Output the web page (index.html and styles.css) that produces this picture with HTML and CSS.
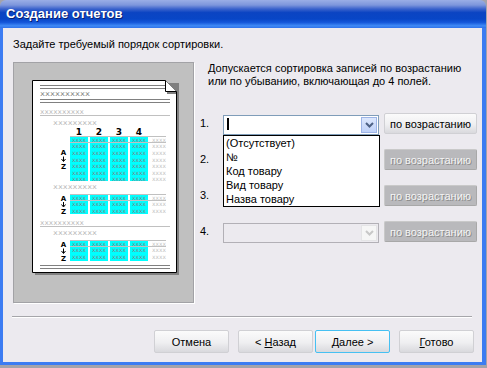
FILE: index.html
```html
<!DOCTYPE html>
<html>
<head>
    <title>Создание отчетов</title>
    <link rel="stylesheet" href="styles.css">
</head>
<body>
    <div class="window">
        <div class="titlebar"><span class="title">Создание отчетов</span></div>
        <div class="frame">
            <div class="client">
                <p class="prompt">Задайте требуемый порядок сортировки.</p>
                <div class="main">
                    <div class="preview">
                        <svg class="sketch" viewBox="14 63 179 239" width="179" height="239">
                            <defs>
                                <g id="row">
                                    <text class="cellx"><tspan x="72">xxxx</tspan><tspan x="92">xxxx</tspan><tspan x="112">xxxx</tspan><tspan x="132">xxxx</tspan><tspan x="152" class="light">xxxx</tspan></text>
                                </g>
                                <g id="az">
                                    <text class="az" x="63.5" y="6">A</text>
                                    <path d="M63.5 7.5 V12 M61.5 10 L63.5 12.5 L65.5 10" class="arrow"/>
                                    <text class="az" x="63.5" y="19.5">Z</text>
                                </g>
                            </defs>
                            <rect x="35" y="83" width="144" height="192" fill="#808080"/>
                            <path d="M32.5 80.5 H165.5 L176.5 91.5 V272.5 H32.5 Z" fill="#fff" stroke="#000"/>
                            <path d="M165.5 80.5 V91.5 H176.5" fill="#fff" stroke="#000"/>
                            <rect x="167" y="92" width="9" height="2" fill="#808080"/>

                            <path d="M40 85.5 H165 M40 88.5 H165 M40 99.5 H170 M40 102.5 H170 M40 265.5 H170 M40 268.5 H170" class="dark"/>
                            <path d="M40 115.5 H170 M40 226.5 H170" class="pale"/>
                            <text class="xs darkx" x="40" y="95.5" textLength="50" lengthAdjust="spacingAndGlyphs">xxxxxxxxxx</text>
                            <text class="xs" x="40" y="114" textLength="44" lengthAdjust="spacingAndGlyphs">xxxxxxxxxx</text>
                            <text class="xs" x="53" y="125" textLength="44" lengthAdjust="spacingAndGlyphs">xxxxxxxxx</text>
                            <text class="xs" x="53" y="189" textLength="44" lengthAdjust="spacingAndGlyphs">xxxxxxxxx</text>
                            <text class="xs" x="40" y="225" textLength="44" lengthAdjust="spacingAndGlyphs">xxxxxxxxxx</text>
                            <text class="xs" x="53" y="235" textLength="44" lengthAdjust="spacingAndGlyphs">xxxxxxxxx</text>

                            <text class="num" x="79" y="135">1</text>
                            <text class="num" x="99" y="135">2</text>
                            <text class="num" x="119" y="135">3</text>
                            <text class="num" x="139" y="135">4</text>

                            <g class="cyan">
                                <rect x="70" y="136" width="18" height="45"/>
                                <rect x="90" y="136" width="18" height="45"/>
                                <rect x="110" y="136" width="18" height="45"/>
                                <rect x="130" y="136" width="18" height="45"/>
                                <rect x="70" y="194" width="18" height="20"/>
                                <rect x="90" y="194" width="18" height="20"/>
                                <rect x="110" y="194" width="18" height="20"/>
                                <rect x="130" y="194" width="18" height="20"/>
                                <rect x="70" y="240" width="18" height="21"/>
                                <rect x="90" y="240" width="18" height="21"/>
                                <rect x="110" y="240" width="18" height="21"/>
                                <rect x="130" y="240" width="18" height="21"/>
                            </g>
                            <path d="M70 136.5 H166 M70 142.5 H166 M70 194.5 H166 M70 200.5 H166 M70 240.5 H166 M70 246.5 H166" class="pale"/>

                            <use href="#row" y="141.5"/>
                            <use href="#row" y="148.2"/>
                            <use href="#row" y="154.8"/>
                            <use href="#row" y="161.5"/>
                            <use href="#row" y="168.2"/>
                            <use href="#row" y="174.8"/>
                            <use href="#row" y="181.3"/>
                            <use href="#row" y="199.5"/>
                            <use href="#row" y="206.3"/>
                            <use href="#row" y="213"/>
                            <use href="#row" y="245.5"/>
                            <use href="#row" y="252.3"/>
                            <use href="#row" y="259"/>

                            <use href="#az" y="149"/>
                            <use href="#az" y="194.5"/>
                            <use href="#az" y="241"/>
                        </svg>
                    </div>
                    <div class="options">
                        <p class="hint">Допускается сортировка записей по возрастанию<br>или по убыванию, включающая до 4 полей.</p>
                        <div class="rows">
                            <div class="row">
                                <span class="num-label">1.</span>
                                <div class="combo active">
                                    <span class="caret"></span>
                                    <span class="drop"><svg width="9" height="6" viewBox="0 0 9 6"><polyline points="1,1 4.5,4.5 8,1"/></svg></span>
                                    <ul class="list">
                                        <li>(Отсутствует)</li>
                                        <li>№</li>
                                        <li>Код товару</li>
                                        <li>Вид товару</li>
                                        <li>Назва товару</li>
                                    </ul>
                                </div>
                                <button class="btn order">по возрастанию</button>
                            </div>
                            <div class="row">
                                <span class="num-label">2.</span>
                                <div class="combo off"><span class="drop"><svg width="9" height="6" viewBox="0 0 9 6"><polyline points="1,1 4.5,4.5 8,1"/></svg></span></div>
                                <button class="btn order" disabled>по возрастанию</button>
                            </div>
                            <div class="row">
                                <span class="num-label">3.</span>
                                <div class="combo off"><span class="drop"><svg width="9" height="6" viewBox="0 0 9 6"><polyline points="1,1 4.5,4.5 8,1"/></svg></span></div>
                                <button class="btn order" disabled>по возрастанию</button>
                            </div>
                            <div class="row">
                                <span class="num-label">4.</span>
                                <div class="combo off"><span class="drop"><svg width="9" height="6" viewBox="0 0 9 6"><polyline points="1,1 4.5,4.5 8,1"/></svg></span></div>
                                <button class="btn order" disabled>по возрастанию</button>
                            </div>
                        </div>
                    </div>
                </div>
                <div class="sep"></div>
                <div class="footer">
                    <button class="btn">Отмена</button>
                    <button class="btn back">&lt; <u>Н</u>азад</button>
                    <button class="btn default"><u>Д</u>алее &gt;</button>
                    <button class="btn finish"><u>Г</u>отово</button>
                </div>
            </div>
        </div>
    </div>
</body>
</html>
```

FILE: styles.css
```css
* {
    box-sizing: border-box;
}

body {
    margin: 0;
    background-color: #a3a3ab;
    font-family: "Liberation Sans", Arial, sans-serif;
    font-size: 11px;
    color: #000;
}

.window {
    width: 486px;
    height: 365px;
    display: flex;
    flex-direction: column;
}

.titlebar {
    height: 28px;
    display: flex;
    align-items: center;
    padding: 0 6px 1px;
    border-radius: 6px 6px 0 0;
    background: linear-gradient(#9aaee6 0%, #7d96dc 18%, #3a62cc 32%, #0b44c2 45%, #0846c6 68%, #1457da 80%, #3f8af6 92%, #2f72ea 100%);
}

.title {
    font-weight: bold;
    font-size: 13px;
    color: #fff;
    text-shadow: 1px 1px 0 #0a1f70;
}

.frame {
    flex: 1;
    display: flex;
    border-style: solid;
    border-color: #3c7cf2;
    border-width: 0 4px 3px 3px;
}

.client {
    flex: 1;
    min-width: 0;
    background-color: #eceaef;
    padding: 10px 5px 0 10px;
}

.prompt {
    margin: 0;
    line-height: 13px;
}

.main {
    display: flex;
    margin-top: 11px;
}

.preview {
    width: 181px;
    height: 241px;
    flex-shrink: 0;
    background-color: #c0c0c0;
    border: 1px solid #a2a2a6;
    box-shadow: 1px 1px 0 #fff;
}

.sketch {
    display: block;
}

.dark {
    stroke: #808080;
    fill: none;
}

.pale {
    stroke: #c0c0c0;
    fill: none;
}

.cyan rect {
    fill: #00ffff;
}

.xs {
    font-family: "DejaVu Sans Mono", monospace;
    font-size: 7px;
    fill: #b8b8b8;
}

.darkx {
    fill: #808080;
}

.cellx {
    font-family: "DejaVu Sans Mono", monospace;
    font-size: 5.8px;
    fill: #808080;
}

.cellx .light {
    fill: #c0c0c0;
}

.num {
    font-family: "DejaVu Sans", sans-serif;
    font-weight: bold;
    font-size: 9px;
    text-anchor: middle;
}

.az {
    font-family: "DejaVu Sans", sans-serif;
    font-weight: bold;
    font-size: 7px;
    text-anchor: middle;
}

.arrow {
    stroke: #000;
    fill: none;
}

.options {
    flex: 1;
    min-width: 0;
}

.hint {
    margin: 0 0 0 14px;
    line-height: 13px;
    white-space: nowrap;
}

.rows {
    display: flex;
    flex-direction: column;
    gap: 15px;
    margin: 25px 0 0 6px;
}

.row {
    display: grid;
    grid-template-columns: 18px 156px 93px;
    column-gap: 5px;
    align-items: start;
    height: 21px;
}

.num-label {
    line-height: 21px;
}

.combo {
    position: relative;
    height: 20px;
    margin-top: 2px;
    border: 1px solid #7f9db9;
    background-color: #fff;
}

.combo.off {
    border-color: #b2b0b6;
    background-color: #eceaef;
}

.caret {
    position: absolute;
    left: 3px;
    top: 2px;
    width: 2px;
    height: 12px;
    background-color: #000;
}

.drop {
    position: absolute;
    right: 1px;
    top: 1px;
    bottom: 1px;
    width: 16px;
    display: flex;
    align-items: center;
    justify-content: center;
    border: 1px solid #9db4e6;
    background: linear-gradient(#dce7fd, #bfd1f8);
}

.drop polyline {
    fill: none;
    stroke: #4d6185;
    stroke-width: 2;
}

.combo.off .drop {
    border-color: #e4e4e6;
    background: #f6f6f6;
}

.combo.off .drop polyline {
    stroke: #c8c8c8;
}

.list {
    position: absolute;
    left: -1px;
    top: 19px;
    width: 157px;
    margin: 0;
    padding: 0;
    list-style: none;
    border: 1px solid #000;
    background-color: #fff;
    z-index: 2;
}

.list li {
    height: 14px;
    line-height: 14px;
    padding-left: 2px;
}

.btn {
    height: 23px;
    width: 75px;
    padding: 0;
    font-family: "Liberation Sans", Arial, sans-serif;
    font-size: 11px;
    color: #000;
    border: 1px solid #d0d0d4;
    border-radius: 2px;
    background: linear-gradient(#fbfbfb 0%, #efeff1 55%, #d9d9dd 100%);
}

.btn.order {
    width: 93px;
    height: 21px;
}

.btn:disabled {
    color: #f4f4f4;
    text-shadow: 1px 1px 0 #8a8a8a;
    border-color: #c9c9c9 #a8a8a8 #a8a8a8 #c9c9c9;
    background: #b9b9bc;
}

.sep {
    height: 2px;
    margin: 13px 5px 0 -1px;
    border-top: 1px solid #a6a6aa;
    border-bottom: 1px solid #fff;
}

.footer {
    display: flex;
    justify-content: flex-end;
    margin: 12px 3px 0 0;
}

.back {
    margin-left: 9px;
}

.default {
    margin-left: 2px;
    border-color: #46c0f2;
}

.finish {
    margin-left: 9px;
}
```
